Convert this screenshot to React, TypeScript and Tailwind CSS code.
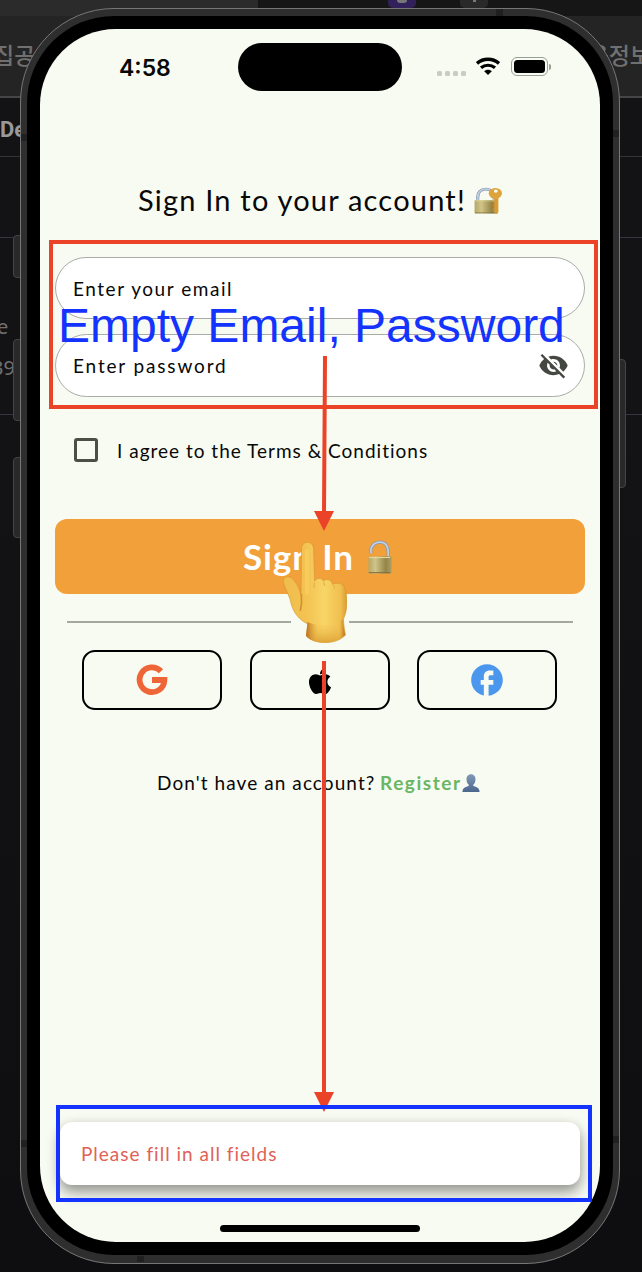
import { MdFacebook, MdVisibilityOff } from "react-icons/md";
import { FaApple } from "react-icons/fa";

function Lock({ open = false, keyed = false, className }: { open?: boolean; keyed?: boolean; className: string }) {
  const shackle = open ? "M4.500 12.500C2.500 7 7 2 13.500 2s8.500 4.500 8.500 9.500v4" : "M4.5 15v-3c0-5.500 3-9.500 8-9.500s8 4 8 9.500v3";
  return (
    <svg viewBox="0 0 28 32" preserveAspectRatio="none" className={className} aria-hidden="true">
      <defs>
        <linearGradient id={open ? "bo" : "bk"} x1="0" x2="1" y1="0" y2="0">
          <stop offset="0" stopColor="#b5a866" /><stop offset=".3" stopColor="#d0c488" /><stop offset=".75" stopColor="#968447" /><stop offset="1" stopColor="#aa9f65" />
        </linearGradient>
      </defs>
      <path d={shackle} fill="none" stroke="#8797ac" strokeWidth="3.2" />
      <path d={shackle} fill="none" stroke="#c1d0e5" strokeWidth="1.8" />
      <rect x="1.5" y="15.5" width={keyed ? 22 : 24} height="16" rx="1" fill={open ? "url(#bo)" : "url(#bk)"} />
      <path d="M2 16.500h22" stroke="#e0d9a0" strokeWidth="1" />
      <path d="M2 30.7h22" stroke="#81713d" strokeWidth="1" />
      {keyed && (
        <g>
          <path d="M20.5 12h4v18l-2 2-2-2z" fill="#d99c33" />
          <path d="M20.5 19h-2v2h2v2h-2v2h2" fill="#b97c21" />
          <circle cx="21.6" cy="7.5" r="6.4" fill="#dda43b" />
          <circle cx="22" cy="4.8" r="1.9" fill="#f8fbf2" />
        </g>
      )}
    </svg>
  );
}

function Hand() {
  return (
    <svg viewBox="0 0 64 101" className="absolute left-[283px] top-[542px] h-[101px] w-[64px]" aria-hidden="true">
      <defs>
        <linearGradient id="skin" x1="0" x2="1" y1="0" y2="0">
          <stop offset="0" stopColor="#efbd4c" /><stop offset=".35" stopColor="#f3c251" /><stop offset=".65" stopColor="#f8d567" /><stop offset=".9" stopColor="#f0bf4f" /><stop offset="1" stopColor="#d99b32" />
        </linearGradient>
        <linearGradient id="wrist" x1="0" x2="0" y1="0" y2="1">
          <stop offset="0" stopColor="#f6cc59" stopOpacity="0" /><stop offset="1" stopColor="#dfa439" />
        </linearGradient>
        <linearGradient id="wristEdge" x1="0" x2="1" y1="0" y2="0">
          <stop offset="0" stopColor="#b76f1c" /><stop offset=".3" stopColor="#dca039" stopOpacity="0" /><stop offset=".85" stopColor="#dca039" stopOpacity="0" /><stop offset="1" stopColor="#b76f1c" />
        </linearGradient>
      </defs>
      <path d="M18.500 7c0-9 12-9 12 0l1 32c3-4 7-3 9 0 4-3 8-1 9 3 7-2 12 0 13 6 3 13 1 22-2 29 0 5 1 11 2 16-9 10-31 10-39 1l1.500-12C14 77 9 68 7 57L.7 42c-2.500-8 6-9 9-5 5 5 7 11 8.300 17z" fill="url(#skin)" stroke="#d3942f" strokeWidth=".6" />
      <path d="M24.500 80c9 5 28 4 35.500-3 0 5 1 11 2 16-9 10-31 10-39 1z" fill="url(#wrist)" />
      <path d="M24.500 80c9 5 28 4 35.500-3 0 5 1 11 2 16-9 10-31 10-39 1z" fill="url(#wristEdge)" />
      <path d="M18.300 52c1 9 0 13-1 17" fill="none" stroke="#cf912c" strokeWidth="1.600" />
      <path d="M31.500 40c-1 3-1 4 0 6M40.500 40c1 2 1 3 1 4M49.500 42c2 2 2 3 2 5" fill="none" stroke="#e5b346" strokeWidth="1.200" />
      <path d="M24 9v42" stroke="#f8cc5c" strokeWidth="4" strokeLinecap="round" />
    </svg>
  );
}

function StatusBar() {
  return (
    <div className="flex h-[77px] items-center">
      <span className="mt-[2px] ml-[79px] w-[119px] font-['Inter',sans-serif] text-[23px] leading-none font-semibold">4:58</span>
      <div className="mt-[-1px] h-12 w-[164px] rounded-full bg-black" />
      <div className="mt-[11px] ml-[35px] flex gap-[3px]">
        {[0, 1, 2, 3].map((i) => <i key={i} className="size-[5px] rounded-[1.5px] bg-[#c9ccc5]" />)}
      </div>
      <svg viewBox="0 0 24 18" className="mt-[-3px] ml-[10px] h-[18px] w-6">
        <path d="M1 6.400c6.300-5.500 15.700-5.500 22 0" fill="none" stroke="#000" strokeWidth="3.400" />
        <path d="M5 10.800c4-3.400 10-3.400 14 0" fill="none" stroke="#000" strokeWidth="3.200" />
        <path d="M8.200 14.200c2.200-2 5.400-2 7.600 0L12 18z" />
      </svg>
      <div className="mt-[-2px] ml-[11px] flex h-[19px] w-[37px] items-center rounded-[6px] border border-[#999d95] p-[2px]">
        <div className="h-full w-full rounded-[3.5px] bg-black" />
      </div>
      <i className="mt-[-2px] ml-px h-[6px] w-[2px] rounded-r-full bg-[#999d95]" />
    </div>
  );
}

const field = "ml-[15px] flex w-[530px] shrink-0 items-center justify-between rounded-full border-[1.5px] border-[#a9aba8] bg-white pt-[2px] pr-[15px] pl-[17px] text-[19px]";
const social = "flex h-[60px] w-[140px] items-center justify-center rounded-[13px] border-[2.5px] border-black";

function Screen() {
  return (
    <main className="flex h-[1213px] w-[560px] shrink-0 flex-col overflow-hidden rounded-[76px] bg-[#f8fbf2] text-[#080808]">
      <StatusBar />
      <h1 className="mt-[74px] ml-[98px] flex h-10 items-center text-[29px] whitespace-nowrap">
        <span className="w-[335px] tracking-[1.2px]">Sign In to your account!</span>
        <Lock keyed className="h-[27px] w-[29px]" />
      </h1>
      <div className={`${field} mt-[37px] h-[62px]`}>
        <span className="tracking-[1.55px]">Enter your email</span>
      </div>
      <div className={`${field} mt-[15px] h-[63px]`}>
        <span className="tracking-[1.85px]">Enter password</span>
        <MdVisibilityOff className="mt-[-2px] size-[31px] text-[#444840]" />
      </div>
      <label className="mt-[41px] ml-[34px] flex h-6 items-center text-[19px] whitespace-nowrap">
        <span className="mr-[19px] size-6 rounded-[3px] border-[3px] border-[#4b4f48]" />
        <span className="pt-[2px] tracking-[1px]">I agree to the Terms &amp; Conditions</span>
      </label>
      <button className="mt-[57px] ml-[15px] flex h-[75px] w-[530px] shrink-0 items-center rounded-[12px] bg-[#f2a03a] pl-[188px] text-[35px] font-bold whitespace-nowrap text-white">
        <span className="w-[124px] text-left tracking-[0.9px]">Sign In</span>
        <Lock open className="h-[34px] w-[27px]" />
      </button>
      <div className="mt-[27px] ml-[27px] flex w-[506px] justify-between">
        <i className="h-[2px] w-[224px] bg-[#a4a8a0]" /><i className="h-[2px] w-[224px] bg-[#a4a8a0]" />
      </div>
      <div className="mt-[27px] ml-[42px] flex gap-[27.5px]">
        <div className={social}>
          <svg viewBox="0 0 32 32" className="size-8"><path d="M25 7.200A12.400 12.400 0 1 0 28.400 16H16" fill="none" stroke="#ee6538" strokeWidth="5.800" /></svg>
        </div>
        <div className={social}><FaApple className="mt-[2px] h-[30px] w-[30px] text-black" /></div>
        <div className={social}><MdFacebook className="size-[38px] text-[#4c97ee]" /></div>
      </div>
      <p className="mt-[59px] ml-[117px] flex h-7 shrink-0 items-center text-[19px] whitespace-nowrap">
        <span className="w-[223px] tracking-[1.08px]">Don't have an account?</span>
        <b className="w-[82px] tracking-[1.55px] text-[#6bb663]">Register</b>
        <svg viewBox="0 0 18 18" className="h-[18px] w-[18px]">
          <defs><linearGradient id="bust" x1="0" x2="0" y1="0" y2="1"><stop offset="0" stopColor="#829ab8" /><stop offset="1" stopColor="#4a668c" /></linearGradient></defs>
          <path d="M4.500 5c0-6.500 9-6.500 9 0 0 3-1 5-2.500 6 0 2 6 1 6.500 6v1H.5v-1c.5-5 6.500-4 6.500-6-1.500-1-2.500-3-2.500-6z" fill="url(#bust)" />
        </svg>
      </p>
      <div className="mt-[325px] ml-[20px] flex h-[63px] w-[520px] shrink-0 items-center rounded-[12px] bg-white pl-[21px] text-[19px] text-[#df6257] shadow-[0_8px_14px_#0005,0_2px_12px_#0002]">
        <span className="pt-px tracking-[1px]">Please fill in all fields</span>
      </div>
      <div className="mt-10 ml-[180px] h-[7px] w-[200px] shrink-0 rounded-full bg-black" />
    </main>
  );
}

function Backdrop() {
  return (
    <div className="absolute inset-0 flex flex-col overflow-hidden bg-[#131316] font-['Noto_Sans_CJK_KR',sans-serif] text-[#858585]">
      <div className="flex h-4 w-full shrink-0 bg-[#161616]">
        <div className="h-4 w-[258px] rounded-br-[10px] bg-[#2b2b2b]" />
        <div className="ml-[130px] flex h-[8px] w-7 justify-center rounded-b-[5px] bg-[#32205a]"><i className="h-[3px] w-[10px] rounded-b-full bg-[#777]" /></div>
        <div className="ml-[44px] flex h-[8px] w-7 justify-center rounded-b-[5px] bg-[#292929]"><i className="h-[2px] w-[3px] bg-[#777]" /></div>
      </div>
      <div className="flex h-[82px] shrink-0 items-center justify-between border-b-2 border-[#454545] bg-[#242424] pb-[3px] text-[23px] font-medium whitespace-nowrap text-[#707070]">
        <span className="-ml-[7px]">집공</span><span className="-mr-[9px]">용정보</span>
      </div>
      <div className="flex h-[59px] shrink-0 items-center border-b border-[#343437] pt-[4px] font-['Roboto',sans-serif] text-[22px] font-bold text-[#999]">De</div>
      <div className="h-[81px] shrink-0 border-b border-[#353540]" />
      <div className="h-[177px] shrink-0 border-b border-[#353540] pt-[73px] font-['Noto_Sans',sans-serif] text-[20px] text-[#707070]">
        <div className="-ml-[3px] h-[41px] leading-[32px]">e</div><div className="-ml-[8px] leading-[32px]">39</div>
      </div>
      <div className="grow bg-linear-to-b from-[#131316] to-[#0e0e10]" />
    </div>
  );
}

export default function App() {
  return (
    <div className="relative h-[1272px] w-[642px] overflow-hidden bg-[#131316] font-['Lato',sans-serif]">
      <Backdrop />
      <i className="absolute top-[235px] left-[13px] h-[43px] w-2 rounded-l-sm border border-[#444] bg-[#29292a]" />
      <i className="absolute top-[339px] left-[13px] h-[82px] w-2 rounded-l-sm border border-[#444] bg-[#29292a]" />
      <i className="absolute top-[457px] left-[13px] h-[81px] w-2 rounded-l-sm border border-[#444] bg-[#29292a]" />
      <i className="absolute top-[359px] left-[619px] h-[129px] w-[7px] rounded-r-sm border border-[#444] bg-[#29292a]" />
      <div className="relative ml-[20px] pt-[8px]">
        <div className="h-[1256px] w-[600px] rounded-[94px] border border-[#777] bg-[#2e2e2e] px-[6px] pt-[7px]">
          <div className="h-[1239px] w-[586px] rounded-[87px] bg-black pt-[13px] pl-[13px]">
            <Screen />
          </div>
        </div>
      </div>
      <i className="absolute top-[134px] left-[21px] h-[7px] w-[6px] bg-[#202020]" />
      <i className="absolute top-[130px] left-[613px] h-[7px] w-[6px] bg-[#202020]" />
      <i className="absolute top-[9px] left-[496px] h-[7px] w-[7px] bg-[#202020]" />
      <i className="absolute top-[1140px] left-[21px] h-[7px] w-[6px] bg-[#202020]" />
      <i className="absolute top-[1136px] left-[613px] h-[7px] w-[6px] bg-[#202020]" />
      <i className="absolute top-[1256px] left-[137px] h-[6px] w-[7px] bg-[#202020]" />
      <div className="absolute top-[240px] left-[49px] h-[169px] w-[549px] border-4 border-[#eb4328]" />
      <div className="absolute top-[299px] left-[58px] font-['Liberation_Sans',sans-serif] text-[48px] leading-[54px] whitespace-nowrap text-[#1433ff]">Empty Email, Password</div>
      <svg viewBox="0 0 642 1272" className="absolute inset-0 h-[1272px] w-[642px]">
        <path d="M325 356L324 514M324 661V1094" stroke="#eb4328" strokeWidth="4" />
        <path d="M314 511h20l-10 20zM314 1092h20l-10 20z" fill="#eb4328" />
      </svg>
      <Hand />
      <div className="absolute top-[1105px] left-[56px] h-[97px] w-[536px] border-4 border-[#1433ff]" />
    </div>
  );
}
